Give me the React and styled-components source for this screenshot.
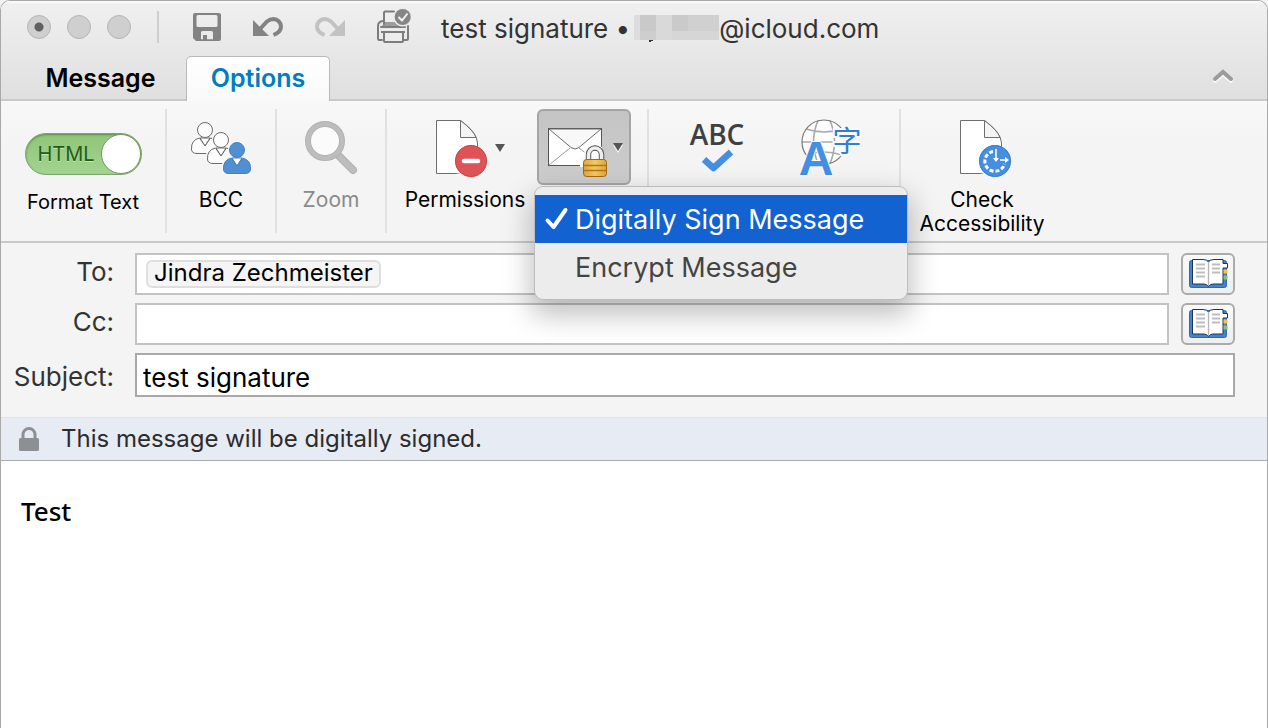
import { useState } from "react";
import styled, { createGlobalStyle, css } from "styled-components";

/* ---------- icons ---------- */

const SaveIcon = () => (
  <svg width="28" height="28" viewBox="0 0 28 28" aria-hidden="true">
    <path
      fill="#838383"
      fillRule="evenodd"
      d="M2 0H26Q28 0 28 2V26Q28 28 26 28H3L0 25V2Q0 0 2 0ZM5 2Q3.5 2 3.5 3.5V12.5Q3.5 14 5 14H23Q24.5 14 24.5 12.5V3.5Q24.5 2 23 2ZM9.5 18Q8 18 8 19.5V26.2H10V22H14V26.2H20V19.5Q20 18 18.5 18Z"
    />
  </svg>
);

const UndoIcon = () => (
  <svg width="30" height="20" viewBox="0 0 30 20" aria-hidden="true">
    <path d="M0 3V19H16Z" fill="currentColor" />
    <path
      d="M7 12L14 4.5Q17 2 20.5 2A7.8 7.8 0 0 1 28 9.5Q28 15 20.5 18"
      fill="none"
      stroke="currentColor"
      strokeWidth="4"
    />
  </svg>
);

const PrintIcon = () => (
  <svg width="36" height="36" viewBox="0 0 36 36" aria-hidden="true">
    <path d="M4 18L8 13H23L28 18Z" fill="#9c9c9c" />
    <path
      d="M7 15V3.5L8 2.5H17M4 18H28M5 31H2.5Q1 31 1 29.5V17Q1 13 5.5 12M27 31H29.5Q31 31 31 29.5V17"
      fill="none"
      stroke="#7d7d7d"
      strokeWidth="2"
      strokeLinecap="round"
    />
    <path d="M4 23H28" stroke="#7d7d7d" strokeWidth="2" />
    <rect x="7" y="23" width="19" height="10" rx="1" fill="#ececec" stroke="#7d7d7d" strokeWidth="2" />
    <circle cx="25.7" cy="8" r="9.5" fill="#ebebeb" />
    <circle cx="25.7" cy="8" r="8" fill="#858585" />
    <path d="M21.5 8L25 11.5L30.5 4.5" fill="none" stroke="#f2f2f2" strokeWidth="2" />
  </svg>
);

const Mosaic = () => (
  <svg width="85" height="28" viewBox="0 0 85 28" aria-hidden="true" shapeRendering="crispEdges">
    <path d="M0 0H6V25H0Z" fill="#dddddd" />
    <path d="M6 0H22V25H6Z" fill="#c9c9c9" />
    <path d="M22 0H38V25H22Z" fill="#d9d9d9" />
    <path d="M38 0H54V16H38Z" fill="#cacaca" />
    <path d="M54 0H85V16H54Z" fill="#d0d0d0" />
    <path d="M38 16H85V25H38Z" fill="#d6d6d6" />
    <path d="M6 16H22V25H6Z" fill="#cecece" />
    <path d="M15 25H19V26H17V27H15Z" fill="#333" />
  </svg>
);

const Chevron = () => (
  <svg width="22" height="15" viewBox="0 0 22 15" aria-hidden="true">
    <path d="M3 12L11 5L19 12" fill="none" stroke="#f8f8f8" strokeWidth="4" strokeLinecap="round" />
    <path d="M3 10L11 3L19 10" fill="none" stroke="#9c9c9c" strokeWidth="4" strokeLinecap="round" />
  </svg>
);

const Caret = () => (
  <svg width="10" height="10" viewBox="0 0 10 10" aria-hidden="true">
    <path d="M0 2H10L5 10Z" fill="#f8f8f8" />
    <path d="M0 0H10L5 8Z" fill="#555" />
  </svg>
);

const BODY = "M8.5 16Q0 18 .5 27Q.5 31.5 6 31.5H22Q27.5 31.5 27.5 27Q28 18 19.5 16L14 24Z";

const Person = ({ x, y, fill, stroke }) => (
  <g transform={`translate(${x} ${y})`}>
    <path d={BODY} fill="#f6f6f6" stroke="#f6f6f6" strokeWidth="4" />
    <circle cx="14" cy="8" r="9" fill="#f6f6f6" />
    <path d="M9 16H19L14 24Z" fill="#fff" stroke={stroke} strokeWidth="1" />
    <path d={BODY} fill={fill} stroke={stroke} strokeWidth="1" />
    <circle cx="14" cy="8" r="7.5" fill={fill} stroke={stroke} strokeWidth="1" />
  </g>
);

const PeopleIcon = () => (
  <svg width="61" height="54" viewBox="0 0 61 54" aria-hidden="true">
    <Person x={0} y={0} fill="#fdfdfd" stroke="#6a6a6a" />
    <Person x={16} y={10} fill="#fdfdfd" stroke="#6a6a6a" />
    <Person x={32} y={20} fill="#518fd2" stroke="#4280c4" />
  </svg>
);

const ZoomIcon = () => (
  <svg width="54" height="54" viewBox="0 0 54 54" aria-hidden="true">
    <path d="M34 33L49 48" stroke="#b0b0b0" strokeWidth="8" strokeLinecap="round" />
    <path d="M34 33L49 48" stroke="#bdbdbd" strokeWidth="6" strokeLinecap="round" />
    <circle cx="21" cy="19" r="17" fill="#fbfbfb" stroke="#b2b2b2" strokeWidth="6" />
    <circle cx="21" cy="19" r="17" fill="none" stroke="#bdbdbd" strokeWidth="4" />
  </svg>
);

const Page = () => (
  <>
    <path d="M.5 .5H24.5Q41 12 41.5 23V53.5H.5Z" fill="#fff" stroke="#6e6e6e" />
    <path d="M24.5 .5V17.5H40Q38 11 24.5 .5Z" fill="#f4f4f4" stroke="#6e6e6e" />
    <path d="M37 50H44V55H20V54Z" fill="#f6f6f6" />
  </>
);

const PermissionsIcon = () => (
  <svg width="52" height="58" viewBox="0 0 52 58" aria-hidden="true">
    <Page />
    <circle cx="35" cy="41" r="16" fill="#dd5357" />
    <circle cx="35" cy="41" r="15.5" fill="none" stroke="#cf484c" />
    <path d="M28 41H42" stroke="#fff" strokeWidth="4.5" strokeLinecap="round" />
  </svg>
);

const AccessibilityIcon = () => (
  <svg width="52" height="58" viewBox="0 0 52 58" aria-hidden="true">
    <Page />
    <circle cx="35" cy="41" r="16" fill="#448fe0" />
    <circle cx="35" cy="41" r="15.5" fill="none" stroke="#3a80cd" />
    <path
      d="M33 31.5A10 10 0 1 0 44.5 44"
      fill="none"
      stroke="#fff"
      strokeWidth="3"
      strokeDasharray="4 2"
    />
    <path d="M36 29V39M40 40H46" stroke="#fff" strokeWidth="1.6" fill="none" />
    <path d="M33 38H39L36 42ZM45 37V43L49 40Z" fill="#fff" />
  </svg>
);

const EnvelopeIcon = () => (
  <svg width="60" height="50" viewBox="0 0 60 50" aria-hidden="true">
    <defs>
      <linearGradient id="gold" x1="0" x2="1">
        <stop offset="0" stopColor="#dfa63c" />
        <stop offset=".5" stopColor="#f3c960" />
        <stop offset="1" stopColor="#dfa63c" />
      </linearGradient>
    </defs>
    <rect x=".5" y=".5" width="53" height="37" fill="#fff" stroke="#555" />
    <path d="M1 37L22 20M53 37L31 20" stroke="#9a9a9a" fill="none" />
    <path d="M1 1L23 19.5Q27 22.5 31 19.5L53 1Z" fill="#f8f8f8" stroke="#6a6a6a" />
    <path d="M32 39V30L36 28Q36 17 47 17Q51 17 54 19V39Z" fill="#fafafa" />
    <path d="M54 16H58V40H54Z" fill="#c6c6c6" />
    <path d="M40.5 33V26.5A6.5 6.5 0 0 1 53.5 26.5V33" fill="none" stroke="#4c4c4c" strokeWidth="5.4" />
    <path d="M40.5 33V26.5A6.5 6.5 0 0 1 53.5 26.5V33" fill="none" stroke="#eee" strokeWidth="3.6" />
    <rect x="35.5" y="31.5" width="23" height="17" rx="3" fill="url(#gold)" stroke="#a3670e" />
    <path d="M36 37.5H58M36 42.5H58" stroke="#b5761b" strokeWidth="1.5" />
  </svg>
);

const SpellingIcon = () => (
  <svg width="56" height="50" viewBox="0 0 56 50" aria-hidden="true">
    <text
      x="28"
      y="21"
      textAnchor="middle"
      fontFamily='"Open Sans", "Noto Sans", sans-serif'
      fontSize="28"
      fontWeight="600"
      fill="#404040"
    >
      ABC
    </text>
    <path d="M15 35.5L24.5 44L42 28" fill="none" stroke="#438fe1" strokeWidth="6.5" strokeLinejoin="round" />
  </svg>
);

const LanguageIcon = () => (
  <svg width="60" height="58" viewBox="0 0 60 58" aria-hidden="true">
    <circle cx="23" cy="22" r="22" fill="#fdfdfd" />
    <g fill="none" stroke="#a9a9a9" strokeWidth="1.6">
      <path d="M5 9Q23 15 41 9M1 22H45M5 35Q23 29 41 35M17 .5Q8 22 17 43.5M29 .5Q38 22 29 43.5" />
    </g>
    <circle cx="23" cy="22" r="22" fill="none" stroke="#777" strokeWidth="1.2" />
    <text
      x="46"
      y="32"
      textAnchor="middle"
      fontFamily='"Liberation Sans", "Noto Sans CJK SC", sans-serif'
      fontSize="29"
      fill="#2f7fd3"
      stroke="#f9f9f9"
      strokeWidth="4"
      paintOrder="stroke"
    >
      字
    </text>
    <text
      x="15"
      y="55"
      textAnchor="middle"
      fontFamily='"Liberation Sans", Arial, sans-serif'
      fontSize="48"
      fontWeight="700"
      fill="#438fe1"
      stroke="#f9f9f9"
      strokeWidth="2"
      paintOrder="stroke"
    >
      A
    </text>
  </svg>
);

const BookIcon = () => (
  <svg width="39" height="30" viewBox="0 0 39 30" aria-hidden="true">
    <rect x=".5" y="1.5" width="37" height="27" rx="2" fill="#4384cd" stroke="#2f68ab" />
    <path
      d="M3.5 .5H14Q18 .5 19.5 3Q21 .5 25 .5H34V4.500H38.500V9H34V25H24Q21 25 19.500 27.500Q18 25 15 25H3.500Z"
      fill="#fff"
      stroke="#1c3557"
    />
    <path d="M34.5 10.5H38.5V14.5H34.5Z" fill="#f6c343" />
    <path d="M34.5 16.5H38.5V20.5H34.5Z" fill="#8fbf77" />
    <path d="M19.5 3V27" stroke="#b5b5b5" strokeWidth="1.4" />
    <path
      d="M7 5.5H16M7 9.5H16M7 13.5H16M7 17.5H16M23 5.5H31M23 9.5H31M23 13.5H31"
      stroke="#bdbdbd"
      strokeWidth="2"
    />
  </svg>
);

const LockIcon = () => (
  <svg width="20" height="24" viewBox="0 0 20 24" aria-hidden="true">
    <path d="M4 13V7.5A6 6 0 0 1 16 7.5V13" fill="none" stroke="#8c8f94" strokeWidth="3" />
    <rect y="11" width="20" height="13" rx="1.5" fill="#8c8f94" />
  </svg>
);

const Tick = () => (
  <svg width="24" height="24" viewBox="0 0 24 24" aria-hidden="true">
    <path
      d="M2.5 13.5L8.5 20L20.5 3"
      fill="none"
      stroke="currentColor"
      strokeWidth="4"
      strokeLinecap="round"
      strokeLinejoin="round"
    />
  </svg>
);

/* ---------- page ---------- */

const App = () => {
  const [html, setHtml] = useState(true);
  const [subject, setSubject] = useState("test signature");
  const [to, setTo] = useState("");
  const [cc, setCc] = useState("");

  return (
    <>
      <GlobalStyle />
      <Window>
        <TitleBar>
          <TitleRow>
            <Lights>
              <Light $dot aria-label="Close" />
              <Light aria-label="Minimize" />
              <Light aria-label="Zoom window" />
            </Lights>
            <TitleDivider />
            <QuickActions>
              <PlainButton aria-label="Save">
                <SaveIcon />
              </PlainButton>
              <PlainButton aria-label="Undo">
                <UndoIcon />
              </PlainButton>
              <PlainButton $faded $flip aria-label="Redo">
                <UndoIcon />
              </PlainButton>
              <PlainButton aria-label="Print">
                <PrintIcon />
              </PlainButton>
            </QuickActions>
            <Title>
              <span>test signature •</span>
              <Mosaic />
              <span>@icloud.com</span>
            </Title>
          </TitleRow>
          <Tabs>
            <Tab>Message</Tab>
            <Tab $active>Options</Tab>
            <Collapse aria-label="Collapse ribbon">
              <Chevron />
            </Collapse>
          </Tabs>
        </TitleBar>

        <Ribbon>
          <Group $width="164px">
            <Toggle>
              <Switch>
                <input type="checkbox" checked={html} onChange={() => setHtml(!html)} />
                <SwitchText>HTML</SwitchText>
                <Knob />
              </Switch>
              <ToggleLabel>Format Text</ToggleLabel>
            </Toggle>
          </Group>
          <Group $width="108px">
            <Tool>
              <ToolIcon>
                <PeopleIcon />
              </ToolIcon>
              BCC
            </Tool>
          </Group>
          <Group $width="108px">
            <Tool disabled>
              <ToolIcon>
                <ZoomIcon />
              </ToolIcon>
              Zoom
            </Tool>
          </Group>
          <Group $width="250px" $end="10px">
            <Tool $width="144px">
              <ToolIcon $indent="10px">
                <PermissionsIcon />
                <Caret />
              </ToolIcon>
              Permissions
            </Tool>
            <MenuAnchor>
              <Pressed aria-label="Security" aria-expanded="true">
                <EnvelopeIcon />
                <Caret />
              </Pressed>
              <Menu role="menu">
                <MenuItem role="menuitemcheckbox" aria-checked="true" $selected>
                  <Tick />
                  Digitally Sign Message
                </MenuItem>
                <MenuItem role="menuitemcheckbox" aria-checked="false">
                  Encrypt Message
                </MenuItem>
              </Menu>
            </MenuAnchor>
          </Group>
          <Group $width="250px">
            <Tool aria-label="Spelling" $width="114px">
              <ToolIcon>
                <SpellingIcon />
              </ToolIcon>
            </Tool>
            <Tool aria-label="Language" $width="114px">
              <ToolIcon>
                <LanguageIcon />
              </ToolIcon>
            </Tool>
          </Group>
          <Group $width="162px">
            <Tool>
              <ToolIcon $indent="8px">
                <AccessibilityIcon />
              </ToolIcon>
              Check
              <br />
              Accessibility
            </Tool>
          </Group>
        </Ribbon>

        <Fields>
          <Row>
            <Label htmlFor="to">To:</Label>
            <Box>
              <Chip>Jindra Zechmeister</Chip>
              <Input id="to" value={to} onChange={(e) => setTo(e.target.value)} />
            </Box>
            <BookButton aria-label="Choose To recipients">
              <BookIcon />
            </BookButton>
          </Row>
          <Row>
            <Label htmlFor="cc">Cc:</Label>
            <Box>
              <Input id="cc" value={cc} onChange={(e) => setCc(e.target.value)} />
            </Box>
            <BookButton aria-label="Choose Cc recipients">
              <BookIcon />
            </BookButton>
          </Row>
          <Row>
            <Label htmlFor="subject" $strong>
              Subject:
            </Label>
            <Box $strong>
              <Input id="subject" value={subject} onChange={(e) => setSubject(e.target.value)} />
            </Box>
          </Row>
        </Fields>

        <Notice>
          <LockIcon />
          This message will be digitally signed.
        </Notice>
        <Body>Test</Body>
      </Window>
    </>
  );
};

const GlobalStyle = createGlobalStyle`
  * {
    box-sizing: border-box;
  }
  body {
    margin: 0;
    background: #f4f4f4;
    font-family: Inter, "Liberation Sans", Arial, sans-serif;
  }
  button,
  input {
    font: inherit;
    color: inherit;
    margin: 0;
    padding: 0;
    border: none;
    background: none;
  }
  svg {
    display: block;
    flex: none;
    overflow: visible;
  }
`;

const Window = styled.div`
  display: flex;
  flex-direction: column;
  min-height: 100vh;
  border: 1px solid #a9a9a9;
  border-bottom: none;
  border-radius: 10px 10px 0 0;
  background: #fff;
  overflow: hidden;
`;

const TitleBar = styled.header`
  background: linear-gradient(#f0f0f0, #dfdfdf);
  box-shadow: inset 0 2px #fafafa, inset 0 -2px #c9c9c9;
`;

const TitleRow = styled.div`
  display: flex;
  align-items: center;
  height: 55px;
  padding: 0 26px 3px;
`;

const Lights = styled.div`
  display: flex;
  gap: 16px;
`;

const Light = styled.button`
  width: 24px;
  height: 24px;
  border: 1px solid #b4b4b4;
  border-radius: 50%;
  background: ${({ $dot }) =>
    $dot ? "radial-gradient(circle, #606060 0 4px, #cfcfcf 5px)" : "#cfcfcf"};
`;

const TitleDivider = styled.div`
  width: 2px;
  height: 32px;
  margin: 0 34px 0 26px;
  background: #cecece;
`;

const QuickActions = styled.div`
  display: flex;
  align-items: center;
  gap: 32px;
`;

const PlainButton = styled.button`
  color: ${({ $faded }) => ($faded ? "#c2c2c2" : "#838383")};
  transform: ${({ $flip }) => ($flip ? "scaleX(-1)" : "none")};
`;

const Title = styled.div`
  display: flex;
  align-items: center;
  margin-left: 28px;
  padding-top: 4px;
  font-size: 26px;
  line-height: 32px;
  color: #333;
  white-space: nowrap;
  svg {
    margin-left: 4px;
  }
`;

const Tabs = styled.nav`
  display: flex;
  height: 45px;
  padding-left: 14px;
`;

const Tab = styled.button`
  width: ${({ $active }) => ($active ? "144px" : "171px")};
  padding-bottom: 2px;
  font-size: 25px;
  font-weight: 600;
  ${({ $active }) =>
    $active &&
    css`
      border: 1px solid #b9b9b9;
      border-bottom: none;
      border-radius: 5px 5px 0 0;
      background: linear-gradient(#fff, #f9f9f9);
      color: #007dbe;
    `}
`;

const Collapse = styled.button`
  margin: 0 33px 4px auto;
`;

const Ribbon = styled.section`
  display: flex;
  height: 142px;
  padding: 8px 0;
  background: linear-gradient(#f8f8f8, #f4f4f4 30%);
  border-bottom: 2px solid #c9c9c9;
`;

const Group = styled.div`
  display: flex;
  justify-content: center;
  width: ${({ $width }) => $width};
  padding-right: ${({ $end }) => $end || 0};
  box-sizing: content-box;
  & + & {
    border-left: 2px solid #e1e1e1;
  }
`;

const Tool = styled.button`
  display: flex;
  flex-direction: column;
  align-items: center;
  align-self: flex-start;
  width: ${({ $width }) => $width || "auto"};
  font-size: 21px;
  line-height: 24px;
  &:disabled {
    color: #8a8a8a;
  }
`;

const ToolIcon = styled.span`
  display: flex;
  align-items: center;
  gap: 7px;
  height: 60px;
  margin: 10px 0 9px;
  padding-left: ${({ $indent }) => $indent || 0};
`;

const Toggle = styled.label`
  display: flex;
  flex-direction: column;
  align-items: center;
  padding-top: 24px;
`;

const Switch = styled.span`
  display: flex;
  align-items: center;
  justify-content: space-between;
  width: 117px;
  height: 42px;
  padding: 0 0 0 12px;
  border: 1px solid #7da56b;
  border-radius: 21px;
  background: linear-gradient(#8fc57a, #a3d490);
  box-shadow: inset 0 1px 2px #5f8b4c;
  input {
    position: absolute;
    opacity: 0;
  }
`;

const SwitchText = styled.span`
  font-size: 20px;
  color: #235c10;
  text-shadow: 0 1px #c7e8ba;
`;

const Knob = styled.span`
  width: 40px;
  height: 40px;
  border: 1px solid #6f9a5e;
  border-radius: 50%;
  background: #fff;
`;

const ToggleLabel = styled.span`
  margin-top: 15px;
  font-size: 20px;
  line-height: 24px;
`;

const MenuAnchor = styled.div`
  position: relative;
`;

const Pressed = styled.button`
  display: flex;
  align-items: center;
  gap: 5px;
  width: 94px;
  height: 76px;
  padding: 12px 0 0 9px;
  border: 2px solid #a5a5a5;
  border-radius: 6px;
  background: linear-gradient(#c4c4c4, #cdcdcd);
  svg + svg {
    margin-bottom: 10px;
  }
`;

const Menu = styled.div`
  position: absolute;
  z-index: 1;
  top: 78px;
  left: -2px;
  width: 372px;
  padding: 8px 0;
  border-radius: 8px;
  background: #ececec;
  box-shadow: 0 0 0 1px #bdbdbd, 0 12px 28px 4px rgba(0, 0, 0, 0.25);
`;

const MenuItem = styled.button`
  display: flex;
  align-items: center;
  gap: 6px;
  width: 100%;
  height: 48px;
  padding-left: ${({ $selected }) => ($selected ? "10px" : "40px")};
  font-size: 27px;
  background: ${({ $selected }) => ($selected ? "#1262d1" : "none")};
  color: ${({ $selected }) => ($selected ? "#fff" : "#444")};
  white-space: nowrap;
`;

const Fields = styled.section`
  display: flex;
  flex-direction: column;
  gap: 8px;
  padding: 10px 32px 20px 0;
  background: #f4f4f4;
  font-size: 26px;
`;

const Row = styled.div`
  display: flex;
  align-items: center;
`;

const Label = styled.label`
  width: 113px;
  margin-right: 21px;
  padding: ${({ $strong }) => ($strong ? "4px 0 0" : "0 0 4px")};
  line-height: 32px;
  text-align: right;
  color: #333;
`;

const Box = styled.div`
  flex: 1;
  display: flex;
  align-items: center;
  height: ${({ $strong }) => ($strong ? "44px" : "42px")};
  padding: ${({ $strong }) => ($strong ? "4px 6px 0" : "0 6px")};
  border: 2px solid ${({ $strong }) => ($strong ? "#a8a8a8" : "#c3c3c3")};
  background: #fff;
`;

const Chip = styled.span`
  margin: 0 3px;
  padding: 0 6px 2px;
  border: 2px solid #dfdfdf;
  border-radius: 6px;
  background: #f5f5f5;
  font-size: 24px;
  line-height: 22px;
  white-space: nowrap;
`;

const Input = styled.input`
  flex: 1;
  min-width: 0;
  height: 100%;
  outline: none;
`;

const BookButton = styled.button`
  display: flex;
  align-items: center;
  justify-content: center;
  width: 54px;
  height: 42px;
  margin-left: 12px;
  border: 2px solid #ababab;
  border-radius: 6px;
  background: linear-gradient(#fafafa, #efefef);
`;

const Notice = styled.div`
  display: flex;
  align-items: center;
  gap: 22px;
  height: 44px;
  padding: 0 18px 1px;
  border-top: 1px solid #e2e2e2;
  border-bottom: 1px solid #a7abb5;
  background: #e7ebf4;
  font-size: 24px;
  color: #2c2c2c;
`;

const Body = styled.main`
  flex: 1;
  padding: 33px 20px;
  font-family: "Noto Sans", "Open Sans", sans-serif;
  font-size: 26px;
  line-height: 34px;
  font-weight: 500;
`;

export default App;
